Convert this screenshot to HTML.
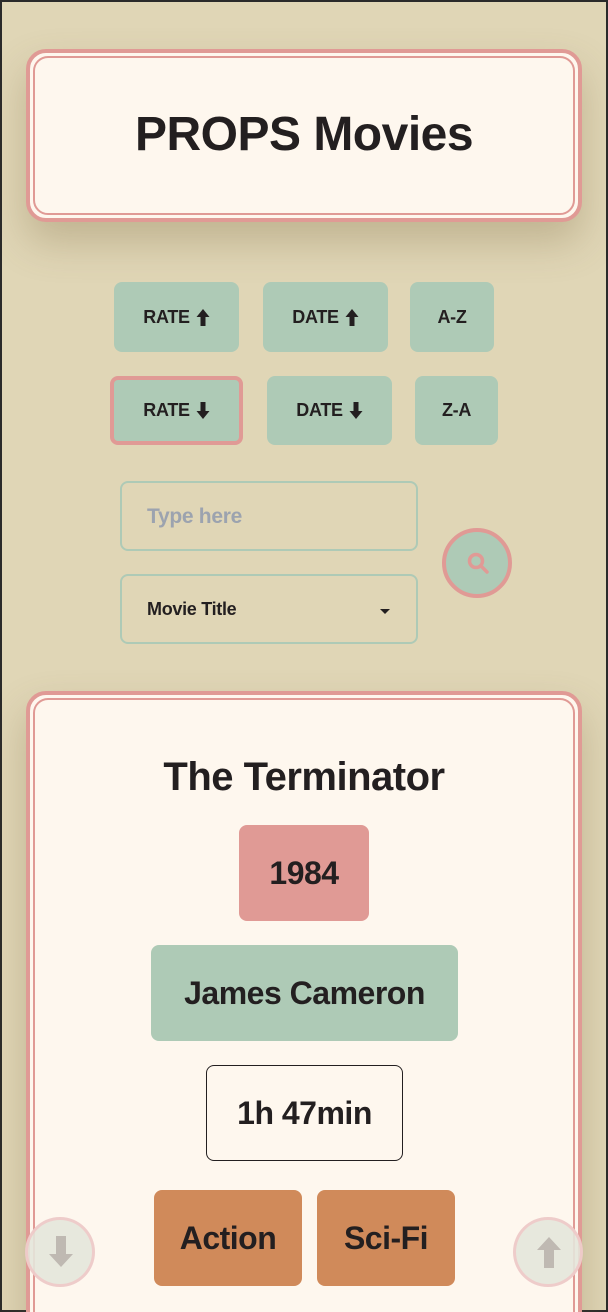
<!DOCTYPE html>
<html><head><meta charset="utf-8"><style>
*{box-sizing:border-box;margin:0;padding:0}
html,body{width:608px;height:1312px;overflow:hidden}
body{background:#e0d6b6;font-family:"Liberation Sans",sans-serif;color:#231f20;position:relative;border:2px solid #2a2a2a}
.a{position:absolute}
.card{border:4px solid #e09a95;border-radius:20px;background:#fef7ee;box-shadow:0 20px 40px rgba(120,100,60,.3)}
.card .in{position:absolute;left:3px;top:3px;right:3px;bottom:3px;border:2px solid #e09a95;border-radius:15px}
.btn{background:#aecab6;border-radius:8px;display:flex;align-items:center;justify-content:center;font-weight:bold;font-size:18px;letter-spacing:-0.3px}
.btn svg{margin-left:6px}
.tag{border-radius:8px;display:flex;align-items:center;justify-content:center;font-weight:bold;font-size:32px;letter-spacing:-0.5px}
</style></head><body>
<div class="a card" style="left:24px;top:47px;width:556px;height:173px"><div class="in"></div>
<div class="a" style="left:0;right:0;top:54px;text-align:center;font-size:48px;font-weight:bold;letter-spacing:-0.5px">PROPS Movies</div></div>

<div class="a btn" style="left:112px;top:280px;width:125px;height:70px">RATE<svg width="14" height="18" viewBox="0 0 14 18"><path d="M4.5 18h5V9h4L7 1 .5 9h4z" fill="#231f20"/></svg></div>
<div class="a btn" style="left:261px;top:280px;width:125px;height:70px">DATE<svg width="14" height="18" viewBox="0 0 14 18"><path d="M4.5 18h5V9h4L7 1 .5 9h4z" fill="#231f20"/></svg></div>
<div class="a btn" style="left:408px;top:280px;width:84px;height:70px">A-Z</div>
<div class="a btn" style="left:108px;top:374px;width:133px;height:69px;border:4px solid #e09a95">RATE<svg width="14" height="18" viewBox="0 0 14 18"><path d="M4.5 0h5v9h4L7 17 .5 9h4z" fill="#231f20"/></svg></div>
<div class="a btn" style="left:265px;top:374px;width:125px;height:69px">DATE<svg width="14" height="18" viewBox="0 0 14 18"><path d="M4.5 0h5v9h4L7 17 .5 9h4z" fill="#231f20"/></svg></div>
<div class="a btn" style="left:413px;top:374px;width:83px;height:69px">Z-A</div>

<div class="a" style="left:118px;top:479px;width:298px;height:70px;border:2px solid #aecab6;border-radius:8px;font-size:21px;font-weight:bold;color:#9ca3af;padding:22px 0 0 25px;letter-spacing:-0.3px">Type here</div>
<div class="a" style="left:118px;top:572px;width:298px;height:70px;border:2px solid #aecab6;border-radius:8px;font-size:18px;font-weight:bold;padding:23px 0 0 25px;letter-spacing:-0.3px">Movie Title
<div class="a" style="left:258px;top:33px;width:0;height:0;border-left:5px solid transparent;border-right:5px solid transparent;border-top:5px solid #231f20"></div></div>
<div class="a" style="left:440px;top:526px;width:70px;height:70px;border-radius:50%;background:#aecab6;border:4px solid #e09a95">
<svg class="a" style="left:19px;top:18px" width="28" height="28" viewBox="0 0 28 28"><circle cx="11" cy="11" r="6.5" fill="none" stroke="#e09a95" stroke-width="3.5"/><path d="M16 16l6 6" stroke="#e09a95" stroke-width="3.5" stroke-linecap="round"/></svg></div>

<div class="a card" style="left:24px;top:689px;width:556px;height:660px"><div class="in"></div></div>
<div class="a" style="left:0;right:0;top:753px;text-align:center;font-size:40px;font-weight:bold;letter-spacing:-0.5px">The Terminator</div>
<div class="a tag" style="left:237px;top:823px;width:130px;height:96px;background:#e09a95">1984</div>
<div class="a tag" style="left:149px;top:943px;width:307px;height:96px;background:#aecab6">James Cameron</div>
<div class="a tag" style="left:204px;top:1063px;width:197px;height:96px;border:1.5px solid #231f20">1h 47min</div>
<div class="a tag" style="left:152px;top:1188px;width:148px;height:96px;background:#d08a5a">Action</div>
<div class="a tag" style="left:315px;top:1188px;width:138px;height:96px;background:#d08a5a">Sci-Fi</div>

<div class="a" style="left:23px;top:1215px;width:70px;height:70px;border-radius:50%;background:rgba(228,230,218,.9);border:3px solid rgba(240,195,195,.75)">
<svg class="a" style="left:20px;top:14px" width="26" height="36" viewBox="0 0 26 36"><path d="M8 2h10v18h7L13 33 1 20h7z" fill="#bfb9b2"/></svg></div>
<div class="a" style="left:511px;top:1215px;width:70px;height:70px;border-radius:50%;background:rgba(228,230,218,.9);border:3px solid rgba(240,195,195,.75)">
<svg class="a" style="left:20px;top:14px" width="26" height="36" viewBox="0 0 26 36"><path d="M8 34h10V16h7L13 3 1 16h7z" fill="#bfb9b2"/></svg></div>
</body></html>
